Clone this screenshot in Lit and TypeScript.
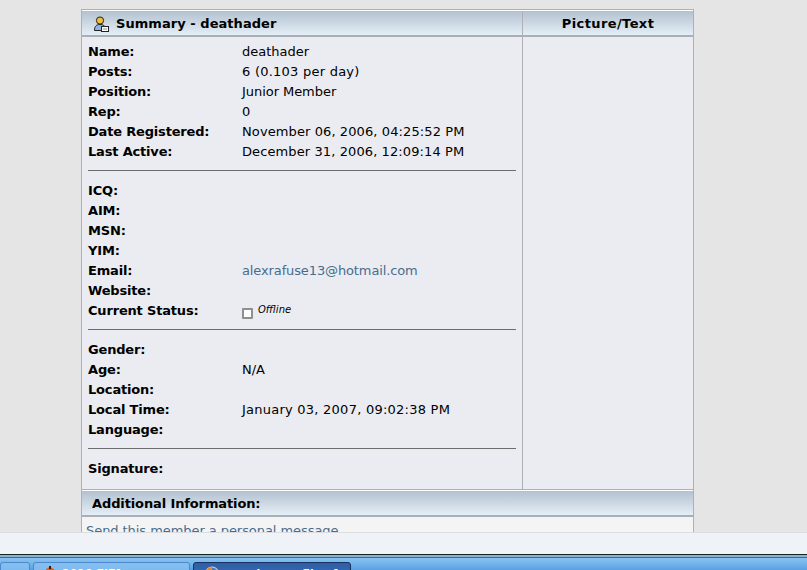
import { LitElement, html, css } from "lit";
import { customElement } from "lit/decorators.js";

type Row = [string, string, number?];
const sections: Row[][] = [
  [["Name:", "deathader"], ["Posts:", "6 (0.103 per day)", 0.24], ["Position:", "Junior Member", -0.05], ["Rep:", "0"], ["Date Registered:", "November 06, 2006, 04:25:52 PM", 0.1], ["Last Active:", "December 31, 2006, 12:09:14 PM", 0.1]],
  [["ICQ:", ""], ["AIM:", ""], ["MSN:", ""], ["YIM:", ""], ["Email:", "@mail"], ["Website:", ""], ["Current Status:", "@status"]],
  [["Gender:", ""], ["Age:", "N/A"], ["Location:", ""], ["Local Time:", "January 03, 2007, 09:02:38 PM", 0.24], ["Language:", ""]],
  [["Signature:", ""]],
];

@customElement("app-root")
export class AppRoot extends LitElement {
  static styles = css`
    :host { display: flex; flex-direction: column; width: 807px; height: 570px; overflow: hidden; background: #e5e5e5; font-family: "DejaVu Sans", Verdana, sans-serif; font-size: 13px; color: #000; }
    .page { flex: 0 0 533px; height: 533px; overflow: hidden; padding: 9px 113px 0 81px; box-sizing: border-box; border-bottom: 1px solid #dcdde2; }
    .box { border: 1px solid #adb0b5; border-bottom: 0; background: #ebecf1; height: 600px; }
    .head { display: flex; height: 24px; border-top: 1px solid #fff; border-bottom: 2px solid #a9afb7; background: linear-gradient(#b3c1cf, #e4eef7); font-weight: bold; line-height: 26px; }
    .h1 { width: 440px; display: flex; align-items: center; gap: 7px; padding: 2px 0 0 11px; box-sizing: border-box; }
    .title { letter-spacing: 0.05px; }
    .ic { flex: none; margin-top: -1px; }
    .h2 { flex: 1; text-align: center; border-left: 1px solid #adb0b5; letter-spacing: 0.4px; }
    .main { display: flex; height: 452px; border-bottom: 1px solid #adb0b5; }
    .left { width: 440px; box-sizing: border-box; padding: 5px 6px 0 6px; }
    .right { flex: 1; border-left: 1px solid #adb0b5; }
    .row { display: flex; height: 20px; line-height: 20px; }
    .k { width: 154px; font-weight: bold; letter-spacing: -0.18px; }
    .v { flex: 1; white-space: nowrap; }
    a { color: #476c8e; text-decoration: none; letter-spacing: -0.12px; }
    .msg a { letter-spacing: -0.06px; }
    hr { height: 1px; background: #6c6c6c; border: 0; margin: 8px 0 10px; }
    .status { display: flex; align-items: flex-start; gap: 5px; }
    .cb { width: 7px; height: 7px; margin-top: 7px; border: 2px solid #8f8f8f; background: #fff; border-radius: 1px; }
    .off { font-size: 10px; font-style: italic; line-height: 18px; }
    .add { padding-left: 10px; letter-spacing: -0.12px; }
    .msg { background: #f5f4f4; height: 60px; padding: 6px 4px; line-height: 16px; }
    .bottom { height: 21px; background: #eff2f7; flex: none; }
    .task { flex: 1; display: flex; gap: 3px; box-sizing: border-box; border-top: 1px solid #0e2a20; overflow: hidden; padding: 7px 0 0 0; background: linear-gradient(#93aed3 0 2px, #3f63ae 2px 3px, #85c4f0 3px, #6fb0ea 10px, #5b9fe4); }
    .btn { flex: none; height: 30px; box-sizing: border-box; border: 1px solid #4e87cc; border-radius: 3px 3px 0 0; display: flex; gap: 6px; padding: 3px 0 0 10px; color: #fff; font: bold 11px/15px "DejaVu Sans", sans-serif; white-space: nowrap; background: linear-gradient(#85bff0, #6fb0ea); }
    .b0 { width: 30px; }
    .b1 { width: 157px; }
    .b2 { width: 158px; background: linear-gradient(#2f5ea6, #3f76c4); border-color: #17305f; }
    .ti { flex: none; }
  `;

  private icon() {
    return html`<svg class="ic" width="16" height="16" viewBox="0 0 16 16">
      <circle cx="7" cy="4.5" r="3.6" fill="#f0bf3c" stroke="#222" stroke-width="1"/>
      <path d="M1.5 14.5c0-4.5 2-6 5.5-6s4.500 1 5 3v3z" fill="#8fb4e4" stroke="#222" stroke-width="1"/>
      <rect x="8.500" y="10.500" width="7" height="5" fill="#fff" stroke="#222"/>
      <rect x="10.500" y="12.500" width="1" height="1" fill="#222"/><rect x="12.500" y="12.500" width="1" height="1" fill="#222"/>
    </svg>`;
  }

  private value(v: string) {
    if (v === "@mail") return html`<a href="#">alexrafuse13@hotmail.com</a>`;
    if (v === "@status") return html`<div class="status"><span class="cb"></span><span class="off">Offline</span></div>`;
    return v;
  }

  render() {
    return html`
      <div class="page"><div class="box">
        <div class="head"><div class="h1">${this.icon()}<span class="title">Summary - deathader</span></div><div class="h2">Picture/Text</div></div>
        <div class="main">
          <div class="left">
            ${sections.map((s, i) => html`${i ? html`<hr />` : ""}${s.map(([k, v, ls]) => html`<div class="row"><div class="k">${k}</div><div class="v" style=${ls ? `letter-spacing:${ls}px` : ""}>${this.value(v)}</div></div>`)}`)}
          </div>
          <div class="right"></div>
        </div>
        <div class="head"><div class="h1 add">Additional Information:</div></div>
        <div class="msg"><a href="#">Send this member a personal message.</a></div>
      </div></div>
      <div class="bottom"></div>
      <div class="task">
        <div class="btn b0"></div>
        <div class="btn b1"><svg class="ti" width="12" height="14" viewBox="0 0 12 14"><circle cx="6" cy="6" r="4.500" fill="#e8590c"/><rect x="5" y="0" width="2" height="3" fill="#222"/></svg><span>2010 FIFA</span></div>
        <div class="btn b2"><svg class="ti" width="16" height="16" viewBox="0 0 16 16"><circle cx="8" cy="8" r="7" fill="#4a7fc0" stroke="#e8e0c8"/><path d="M1 8a7 7 0 0 1 7-7v4z" fill="#e8862a"/></svg><span>member profile of</span></div>
      </div>
    `;
  }
}
